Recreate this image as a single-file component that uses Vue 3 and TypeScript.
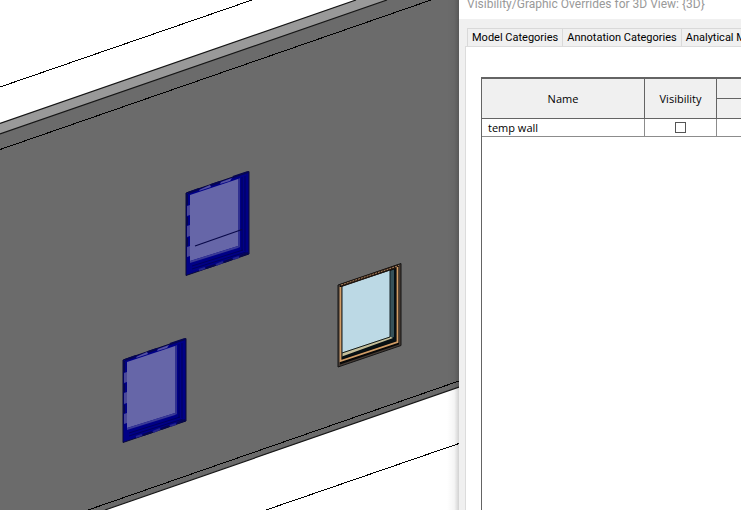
<script setup lang="ts">
import { ref } from 'vue'

interface Pane {
  x: number
  y: number
  sill: boolean
}

interface Category {
  name: string
  visible: boolean
}

const tabs: string[] = ['Model Categories', 'Annotation Categories', 'Analytical Model Categories']
const activeTab = ref(-1)
const rows = ref<Category[]>([{ name: 'temp wall', visible: false }])

const selected: Pane[] = [
  { x: 186, y: 171, sill: true },
  { x: 123, y: 338, sill: false },
]
</script>

<template>
  <main class="workspace">
    <section class="view" aria-label="3D View">
      <svg class="scene" viewBox="0 0 459 510" preserveAspectRatio="xMinYMin slice" aria-hidden="true">
        <defs>
          <linearGradient id="shade" x1="0" x2="1" y1="0" y2="0">
            <stop offset="0" stop-color="#000" stop-opacity="0" />
            <stop offset="0.6" stop-color="#000" stop-opacity="0.04" />
            <stop offset="1" stop-color="#000" stop-opacity="0.18" />
          </linearGradient>
        </defs>
        <rect width="459" height="510" fill="#fff" />
        <path d="M0 123.5 356 0H459V387L105 510H0Z" fill="#6b6b6b" />
        <path d="M0 123.5 356 0H387L0 134Z" fill="#999" />
        <g fill="none" stroke="#161616" stroke-width="1.2">
          <path d="M0 123.5 356 0M0 134 387 0M105 510 459 387" />
        </g>
        <g fill="none" stroke="#000" shape-rendering="crispEdges">
          <path d="M0 87 252 0M0 149.5 431 0M88 510 459 381M266 510 459 443.5" />
        </g>

        <g v-for="pane in selected" :key="pane.x" :transform="`translate(${pane.x} ${pane.y})`">
          <path d="M0 22 63 .5V83L0 104.5Z" fill="#000086" stroke="#08083a" />
          <path d="M1 35 4 34V44L1 45ZM1 55 4 54V65L1 66ZM1 76 4 75V85L1 86Z" fill="#4a4898" />
          <path d="M14 18.5 24 14 25 16 13 20ZM35 11 46 7 44 10 34 13Z" fill="#5552a0" />
          <path d="M4 24 52 8V75L4 90Z" fill="#6666a8" />
          <path d="M52 8 54 7V76L52 77Z" fill="#30308f" />
          <path d="M4 90 52 75V77L4 92Z" fill="#3a3a96" />
          <path d="M56 6V80M59 5V80M6 95 57 79M6 98 60 81" fill="none" stroke="#00005c" />
          <path d="M30 94 37 91M47 88 53 86M13 99 19 97" fill="none" stroke="#24248a" stroke-width="2" />
          <path d="M1 23V34M1 46V54M1 67V75M2 22 13 18M25 14 34 11M47 6 62 1M20 97 29 94M38 91 46 88M54 85 62 82" fill="none" stroke="#060650" stroke-width="2" />
          <path v-if="pane.sill" d="M9 75 56 58.5" fill="none" stroke="#080848" stroke-width="1.2" />
        </g>

        <g transform="translate(338 263)">
          <path d="M0 22 63 .5V82.5L0 104Z" fill="#443a34" stroke="#151515" />
          <path d="M2 22.5 61 2.5V81.5L2 101.5Z" fill="#080808" />
          <path d="M4 24 58 6V78L4 96Z" fill="#071014" />
          <path d="M4 23.5 52 7.5V74L4 90Z" fill="#bcd9e5" />
          <path d="M52 8 56 6.5V74L52 75Z" fill="#365159" />
          <path d="M4 89.5 52 73.5 55 75 4 93.5Z" fill="#c4bd98" />
          <path d="M52 7.5V74L4 90M4 23V94" fill="none" stroke="#101c20" />
          <path d="M3 22.5 60 3" fill="none" stroke="#20150f" stroke-width="3" />
          <path d="M3 22 61 2.5" fill="none" stroke="#b18762" stroke-dasharray="2 1" />
          <path d="M2.5 24V98L59.500 79V4" fill="none" stroke="#d09c66" stroke-width="1.8" />
        </g>
        <rect x="447" width="12" height="510" fill="url(#shade)" />
      </svg>
    </section>

    <section class="dialog" aria-labelledby="dialog-title">
      <header class="titlebar">
        <h1 id="dialog-title">Visibility/Graphic Overrides for 3D View: {3D}</h1>
      </header>
      <div class="content">
        <nav class="tabs" role="tablist" aria-label="Categories">
          <button
            v-for="(tab, i) in tabs"
            :key="tab"
            type="button"
            role="tab"
            :aria-selected="activeTab === i"
            @click="activeTab = i"
          >{{ tab }}</button>
        </nav>
        <div class="panel">
          <div class="grid">
            <table>
              <colgroup>
                <col class="name-col" />
                <col class="visibility-col" />
                <col />
              </colgroup>
              <thead>
                <tr>
                  <th rowspan="2" scope="col">Name</th>
                  <th rowspan="2" scope="col">Visibility</th>
                  <th class="last"></th>
                </tr>
                <tr>
                  <th class="last"></th>
                </tr>
              </thead>
              <tbody>
                <tr v-for="(row, i) in rows" :key="row.name">
                  <td><label :for="`visible-${i}`">{{ row.name }}</label></td>
                  <td class="check"><input :id="`visible-${i}`" v-model="row.visible" type="checkbox" /></td>
                  <td class="last"></td>
                </tr>
              </tbody>
            </table>
          </div>
        </div>
      </div>
    </section>
  </main>
</template>

<style>
body {
  margin: 0;
}
</style>

<style scoped>
.workspace {
  display: flex;
  height: 100vh;
  overflow: hidden;
  font: 11px/16px "Open Sans", "Noto Sans", sans-serif;
  color: #000;
}

.view {
  flex: 1;
  min-width: 0;
}

.scene {
  display: block;
  width: 100%;
  height: 100%;
}

.dialog {
  box-sizing: border-box;
  display: flex;
  flex: 0 0 282px;
  flex-direction: column;
  overflow: hidden;
  background: #f0f0f0;
}

.titlebar {
  display: flex;
  align-items: flex-end;
  height: 19px;
  padding: 0 8px;
  background: #fff;
}

h1 {
  margin: 0 0 6px;
  font-family: Roboto, sans-serif;
  font-size: 12px;
  font-weight: 400;
  line-height: 18px;
  color: #999;
  white-space: nowrap;
}

.content {
  display: flex;
  flex: 1;
  flex-direction: column;
  padding: 9px 0 0 6px;
}

.tabs {
  display: flex;
  padding-left: 2px;
  font-family: Roboto, sans-serif;
}

.tabs button {
  flex: none;
  height: 18px;
  padding: 1px 4px 0;
  border: 1px solid #d9d9d9;
  border-width: 1px 1px 0 0;
  background: #f0f0f0;
  font: inherit;
  color: inherit;
  white-space: nowrap;
}

.tabs button:first-child {
  border-left-width: 1px;
}

.panel {
  display: flex;
  flex: 1;
  padding: 30px 0 0 15px;
  border: 1px solid #dcdcdc;
  border-width: 1px 0 0 1px;
  background: #fff;
}

.grid {
  flex: 1;
  min-width: 0;
  border: 1px solid #646464;
  border-width: 2px 0 0 1px;
}

table {
  width: 100%;
  border-spacing: 0;
  table-layout: fixed;
}

.name-col {
  width: 163px;
}

.visibility-col {
  width: 72px;
}

th,
td {
  box-sizing: border-box;
  padding: 0;
  border: 1px solid #646464;
  border-width: 0 1px 1px 0;
}

th {
  height: 20px;
  background: #f0f0f0;
  font-weight: 400;
}

td {
  height: 18px;
  padding-left: 6px;
  border-color: #8c8c8c;
}

.last {
  border-right: 0;
}

td label {
  display: block;
}

.check {
  padding: 0;
  text-align: center;
}

input {
  box-sizing: border-box;
  display: block;
  width: 11px;
  height: 11px;
  margin: 0 auto;
  border: 1px solid #555;
  background: #fff;
  appearance: none;
}

input:checked {
  background: #333;
  box-shadow: inset 0 0 0 2px #fff;
}
</style>
